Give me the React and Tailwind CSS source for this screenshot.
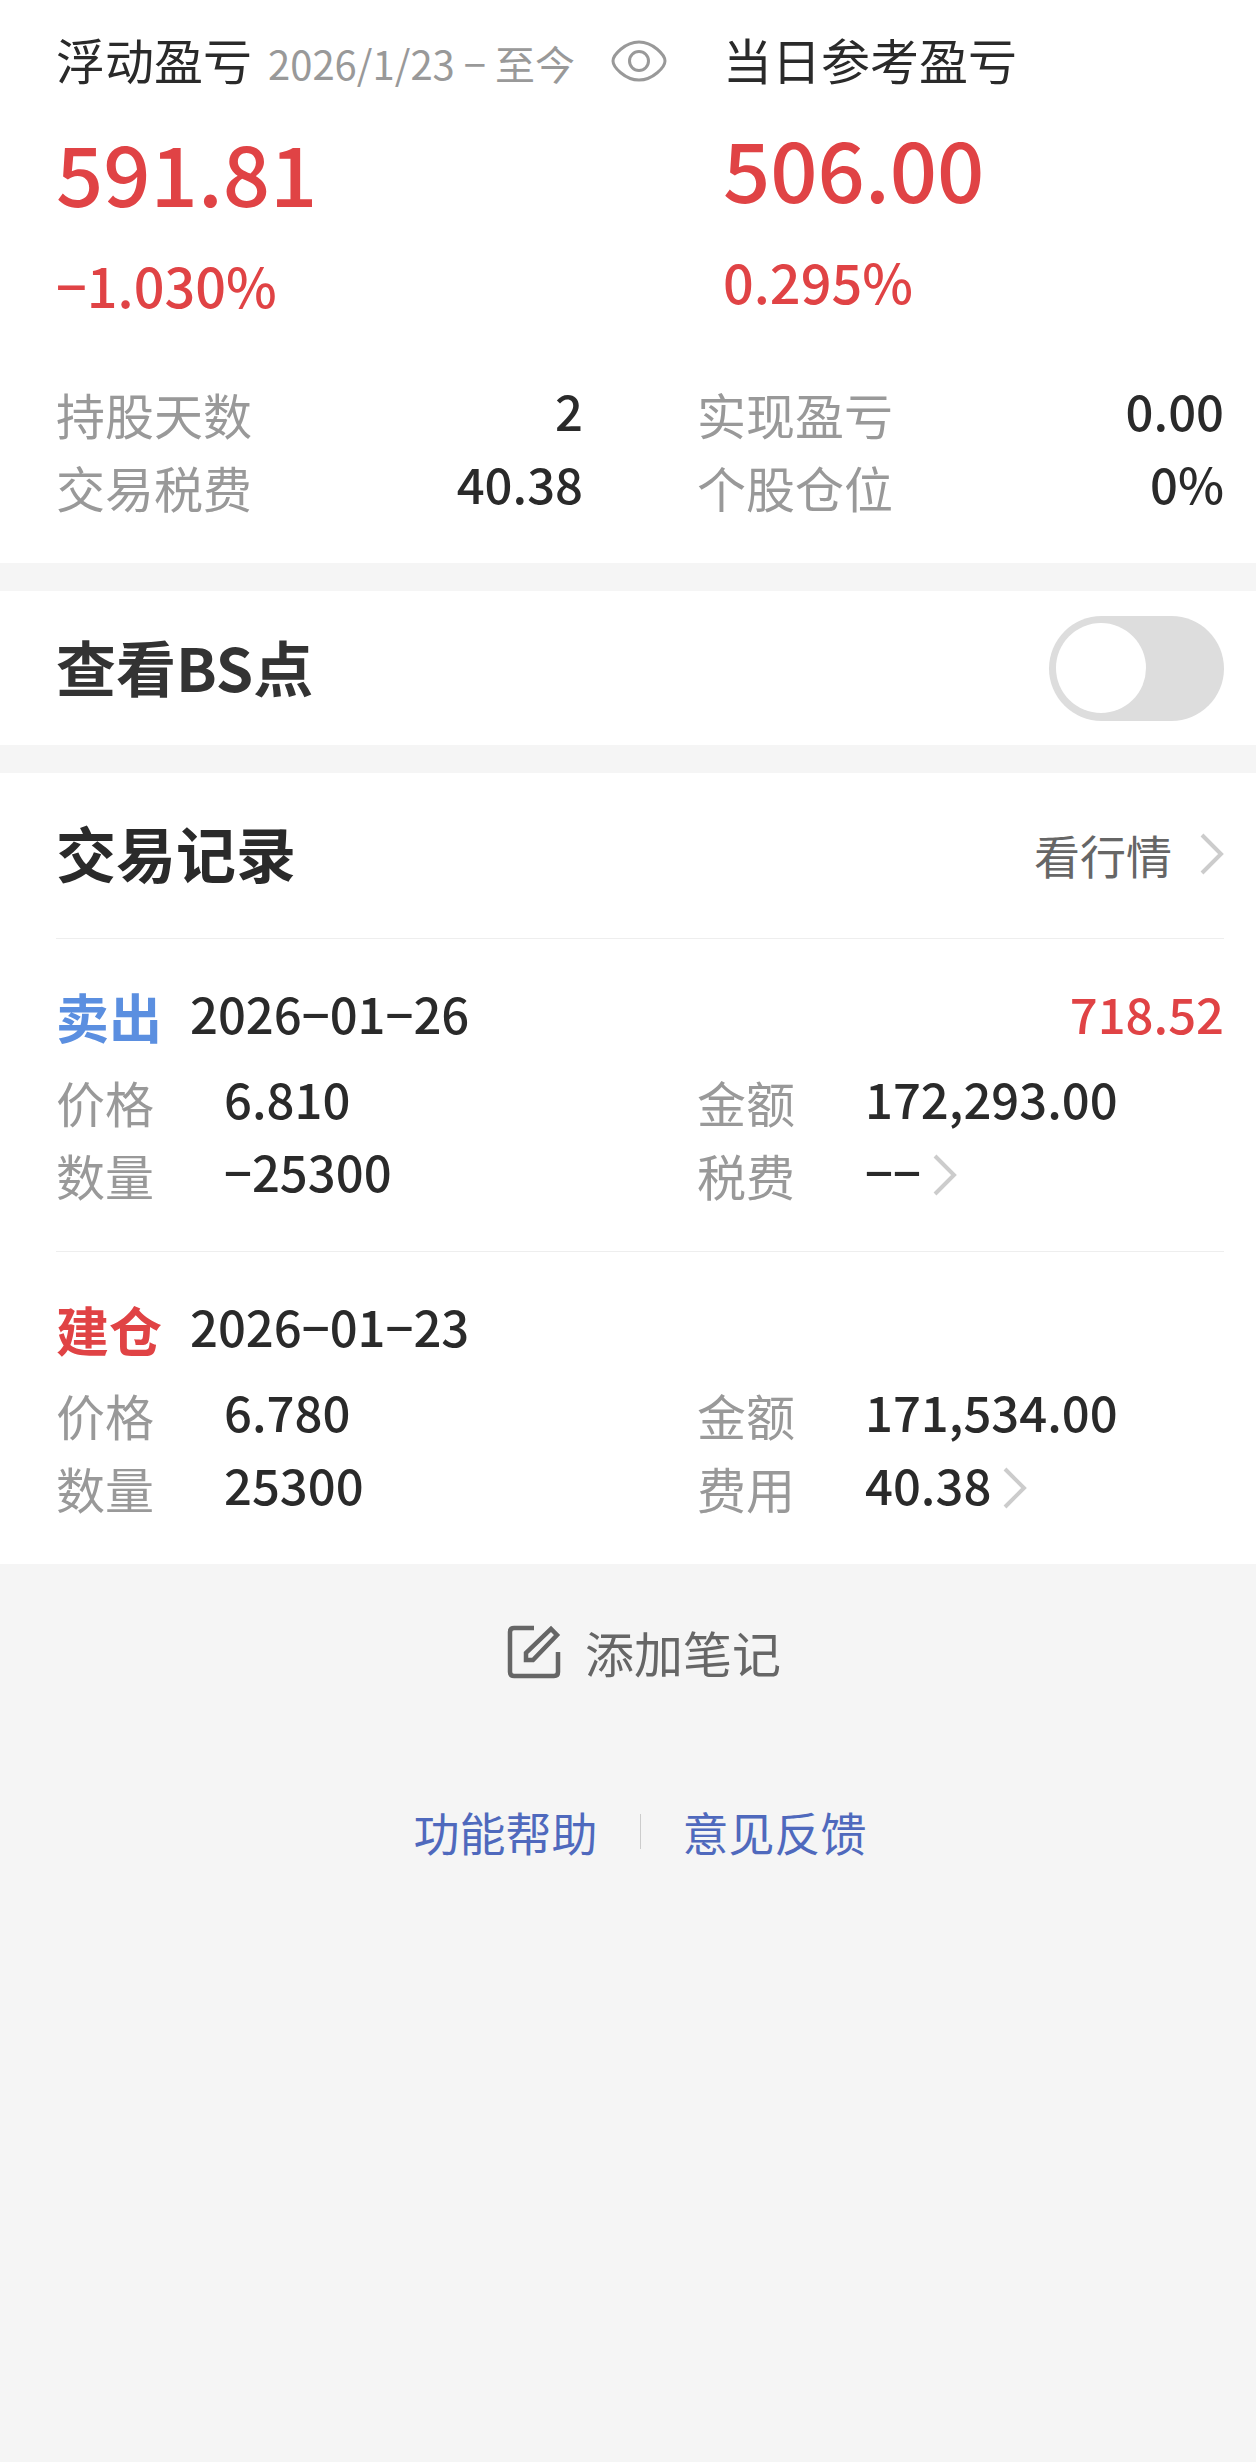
import { useState } from 'react'

const summary = [
  { label: '持股天数', value: '2' },
  { label: '实现盈亏', value: '0.00' },
  { label: '交易税费', value: '40.38' },
  { label: '个股仓位', value: '0%' },
]

const trades = [
  {
    id: 1, action: '卖出', color: 'text-[#5b8fe0]', date: '2026−01−26', profit: '718.52',
    fields: [
      { label: '价格', value: '6.810' },
      { label: '金额', value: '172,293.00' },
      { label: '数量', value: '−25300' },
      { label: '税费', value: '−−', link: true },
    ],
  },
  {
    id: 2, action: '建仓', color: 'text-[#e04345]', date: '2026−01−23', profit: null,
    fields: [
      { label: '价格', value: '6.780' },
      { label: '金额', value: '171,534.00' },
      { label: '数量', value: '25300' },
      { label: '费用', value: '40.38', link: true },
    ],
  },
]

function Chevron() {
  return (
    <svg width="24" height="42" viewBox="0 0 24 42" fill="none" stroke="#cccccc" strokeWidth="4" aria-hidden="true">
      <path d="M2 2 L21 21 L2 40" />
    </svg>
  )
}

function EyeIcon() {
  return (
    <svg width="56" height="42" viewBox="0 0 56 42" fill="none" stroke="#999999" strokeWidth="3" aria-hidden="true">
      <path d="M2 21 C2 15 14 2 28 2 C42 2 54 15 54 21 C54 27 42 40 28 40 C14 40 2 27 2 21 Z" />
      <circle cx="28" cy="21" r="9.5" />
    </svg>
  )
}

function NoteIcon() {
  return (
    <svg width="54" height="54" viewBox="0 0 54 54" fill="none" stroke="#666666" strokeWidth="4.5" aria-hidden="true">
      <path d="M27 3 H7 Q3 3 3 7 V47 Q3 51 7 51 H47 Q51 51 51 47 V27" />
      <path d="M19 35 V28 L44 4 L50 10 L26 35 Z" />
    </svg>
  )
}

export default function App() {
  const [showPoints, setShowPoints] = useState(false)

  return (
    <div className="min-h-screen bg-[#f5f5f5] font-['Noto_Sans_CJK_SC',sans-serif] text-[#2a2a2a]">
      <section className="bg-white pt-[25px] pr-8 pb-10 pl-14">
        <div className="grid grid-cols-[667fr_501fr] text-[#e04345]">
          <div>
            <div className="flex h-[72px] items-center justify-between pr-14">
              <h2 className="flex items-baseline gap-4 whitespace-nowrap text-[49px] leading-[72px] text-[#2a2a2a]">
                浮动盈亏 <span className="text-[40px] text-[#999999]">2026/1/23 − 至今</span>
              </h2>
              <button type="button" aria-label="隐藏金额"><EyeIcon /></button>
            </div>
            <p className="mt-6 text-[83px] leading-[100px] font-medium">591.81</p>
            <p className="mt-7 text-[54px] leading-[72px] font-medium">−1.030%</p>
          </div>
          <div>
            <h2 className="text-[49px] leading-[68px] text-[#2a2a2a]">当日参考盈亏</h2>
            <p className="mt-6 text-[83px] leading-[100px] font-medium">506.00</p>
            <p className="mt-7 text-[54px] leading-[72px] font-medium">0.295%</p>
          </div>
        </div>

        <dl className="mt-14 grid grid-cols-2 gap-x-[114px]">
          {summary.map(item => (
            <div key={item.label} className="flex h-[73px] items-center justify-between">
              <dt className="text-[49px] leading-[73px] text-[#999999]">{item.label}</dt>
              <dd className="pb-2 text-[49px] leading-[65px] font-medium">{item.value}</dd>
            </div>
          ))}
        </dl>
      </section>

      <section className="mt-7 flex h-[154px] items-center justify-between bg-white pr-8 pl-14">
        <label htmlFor="bs-points" className="pb-1 text-[60px] leading-[80px] font-bold text-[#333333]">查看BS点</label>
        <input
          id="bs-points"
          type="checkbox"
          checked={showPoints}
          onChange={e => setShowPoints(e.target.checked)}
          className="flex h-[105px] w-[175px] cursor-pointer appearance-none items-center rounded-full bg-[#dddddd] px-[7px] transition-colors before:size-[90px] before:rounded-full before:bg-white before:content-[''] checked:justify-end checked:bg-[#e04345]"
        />
      </section>

      <section className="mt-7 bg-white pr-8 pl-14">
        <div className="flex h-[165px] items-center justify-between pb-1">
          <h2 className="pb-1 text-[60px] leading-[80px] font-bold">交易记录</h2>
          <a href="#quotes" className="flex items-center gap-7 text-[46px] leading-[64px] text-[#666666]">看行情 <Chevron /></a>
        </div>

        {trades.map(trade => (
          <article key={trade.id} className="border-t border-[#eeeeee] py-10">
            <div className="flex h-[74px] items-center gap-7">
              <h3 className={`text-[53px] leading-[74px] font-bold ${trade.color}`}>{trade.action}</h3>
              <time className="pb-2 text-[49px] leading-[65px] font-medium">{trade.date}</time>
              {trade.profit && <span className="ml-auto pb-2 text-[49px] leading-[65px] font-medium text-[#e04345]">{trade.profit}</span>}
            </div>
            <dl className="mt-3 grid grid-cols-2 gap-x-[114px]">
              {trade.fields.map(field => (
                <div key={field.label} className="flex h-[73px] items-center">
                  <dt className="w-[168px] text-[49px] leading-[73px] text-[#999999]">{field.label}</dt>
                  <dd className="text-[49px] leading-[65px] font-medium">
                    {field.link
                      ? <a href={`#fees-${trade.id}`} className="flex items-center gap-3"><span className="pb-2">{field.value}</span><Chevron /></a>
                      : <span className="block pb-2">{field.value}</span>}
                  </dd>
                </div>
              ))}
            </dl>
          </article>
        ))}
      </section>

      <footer className="flex flex-col items-center pt-[52px] pr-8 pl-14">
        <button type="button" className="flex items-center gap-6 pl-2 text-[49px] leading-[72px] text-[#666666]"><NoteIcon /> 添加笔记</button>
        <nav className="mt-[109px] flex items-center gap-[42px] text-[46px] leading-[68px] text-[#4f69bd]">
          <a href="#help">功能帮助</a>
          <span className="h-[35px] w-px bg-[#cccccc]" />
          <a href="#feedback">意见反馈</a>
        </nav>
      </footer>
    </div>
  )
}
